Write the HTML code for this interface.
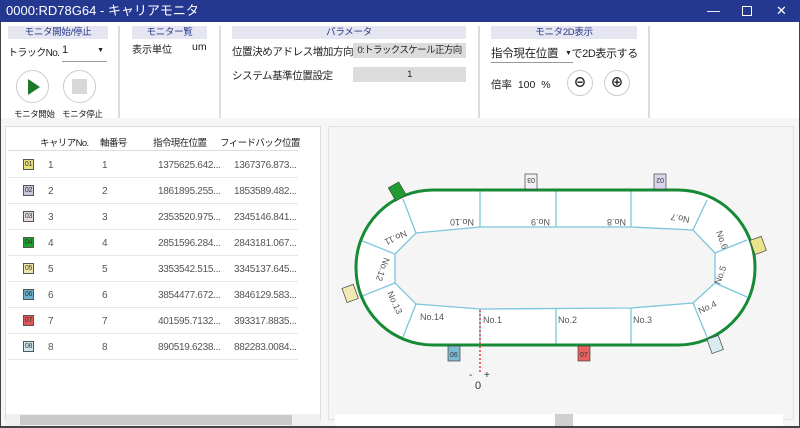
<!DOCTYPE html>
<html><head><meta charset="utf-8"><style>
*{margin:0;padding:0;box-sizing:border-box}
body{width:800px;height:428px;overflow:hidden;font-family:"Liberation Sans","Noto Sans CJK JP",sans-serif;font-size:10.5px;color:#222;background:#f6f6f8;position:relative;white-space:nowrap}
.a{position:absolute}
.title{left:0;top:0;width:800px;height:22px;background:#25388f;color:#fff;font-size:13px;line-height:22px;padding-left:6px}
.tb{left:0;top:22px;width:800px;height:96px;background:#fff}
.hd{background:#e6e6f2;color:#2a3a8a;font-size:9.5px;letter-spacing:-0.3px;text-align:center;height:13px;line-height:13px}
.sep{width:2px;background:#ddd}
.gray{background:#dcdcdc;font-size:9.5px;letter-spacing:-0.6px;text-align:center;height:15px;line-height:15px;overflow:hidden}
.circ{border-radius:50%;border:1.5px solid #ccc;background:#fff}
.row{position:absolute;left:8px;width:290px;height:26px;border-bottom:1px solid #e8e8e8;font-size:10px;color:#555;letter-spacing:-0.3px}
.row span{position:absolute;top:8px}
.sw{position:absolute;left:15px;top:7px;width:11px;height:11px;border:1px solid #555;font-size:7px;line-height:9px;text-align:center;color:#333;font-style:normal}
.th{position:absolute;top:8px;font-size:9.5px;letter-spacing:-0.6px}
</style></head><body>
<div class="a title">0000:RD78G64 - キャリアモニタ<span style="position:absolute;left:707px;font-size:13px">—</span><span style="position:absolute;left:742px;top:6px;width:10px;height:10px;border:1px solid #fff"></span><span style="position:absolute;left:776px;font-size:13px">✕</span></div>
<div class="a tb"></div>
<div class="a hd" style="left:8px;top:26px;width:100px">モニタ開始/停止</div>
<div class="a" style="left:8px;top:44px;font-size:10px;letter-spacing:-0.6px">トラックNo.</div>
<div class="a" style="left:62px;top:44px;width:45px;height:18px;border-bottom:1px solid #999;font-size:11px">1<span style="position:absolute;right:3px;font-size:7px;top:3px">▼</span></div>
<div class="a circ" style="left:16px;top:70px;width:33px;height:33px"></div>
<div class="a" style="left:28px;top:79px;width:0;height:0;border-left:12px solid #1d7a2c;border-top:8px solid transparent;border-bottom:8px solid transparent"></div>
<div class="a circ" style="left:63px;top:70px;width:33px;height:33px"></div>
<div class="a" style="left:72px;top:79px;width:15px;height:15px;background:#d8d8d8"></div>
<div class="a" style="left:14px;top:108px;font-size:8.5px;letter-spacing:-0.4px">モニタ開始</div>
<div class="a" style="left:62px;top:108px;font-size:8.5px;letter-spacing:-0.4px">モニタ停止</div>
<div class="a sep" style="left:118px;top:26px;height:92px"></div>
<div class="a hd" style="left:132px;top:26px;width:75px">モニター覧</div>
<div class="a" style="left:132px;top:41px;font-size:10px">表示単位</div>
<div class="a" style="left:192px;top:41px">um</div>
<div class="a sep" style="left:219px;top:26px;height:92px"></div>
<div class="a hd" style="left:232px;top:26px;width:234px">パラメータ</div>
<div class="a" style="left:232px;top:44px;font-size:10.5px;letter-spacing:-0.4px">位置決めアドレス増加方向</div>
<div class="a gray" style="left:353px;top:43px;width:113px">0:トラックスケール正方向</div>
<div class="a" style="left:232px;top:68px;font-size:10.5px;letter-spacing:-0.4px">システム基準位置設定</div>
<div class="a gray" style="left:353px;top:67px;width:113px">1</div>
<div class="a sep" style="left:478px;top:26px;height:92px"></div>
<div class="a hd" style="left:491px;top:26px;width:146px">モニタ2D表示</div>
<div class="a" style="left:491px;top:45px;width:82px;height:18px;border-bottom:1px solid #999;font-size:11.5px;letter-spacing:-0.3px">指令現在位置</div>
<div class="a" style="left:565px;top:45px;font-size:11px;letter-spacing:-0.4px"><span style="font-size:7px;vertical-align:2px">▼</span>で2D表示する</div>
<div class="a" style="left:491px;top:77px;font-size:10.5px">倍率&nbsp; 100&nbsp; %</div>
<div class="a circ" style="left:567px;top:70px;width:26px;height:26px;text-align:center;line-height:23px;font-size:13px;font-weight:bold">⊖</div>
<div class="a circ" style="left:604px;top:70px;width:26px;height:26px;text-align:center;line-height:23px;font-size:13px;font-weight:bold">⊕</div>
<div class="a sep" style="left:648px;top:26px;height:92px"></div>

<div class="a" style="left:5px;top:126px;width:316px;height:294px;background:#fff;border:1px solid #ddd"></div>
<div class="a" style="left:8px;top:127px;width:290px;height:24px;border-bottom:1px solid #ddd">
<span class="th" style="left:32px">キャリアNo.</span><span class="th" style="left:92px">軸番号</span><span class="th" style="left:145px">指令現在位置</span><span class="th" style="left:212px">フィードバック位置</span></div>
<div class="row" style="top:152px"><i class="sw" style="background:#e8df7a">01</i><span style="left:40px">1</span><span style="left:94px">1</span><span style="left:150px">1375625.642...</span><span style="left:226px">1367376.873...</span></div>
<div class="row" style="top:178px"><i class="sw" style="background:#c8c6da">02</i><span style="left:40px">2</span><span style="left:94px">2</span><span style="left:150px">1861895.255...</span><span style="left:226px">1853589.482...</span></div>
<div class="row" style="top:204px"><i class="sw" style="background:#e6dde4">03</i><span style="left:40px">3</span><span style="left:94px">3</span><span style="left:150px">2353520.975...</span><span style="left:226px">2345146.841...</span></div>
<div class="row" style="top:230px"><i class="sw" style="background:#1f9c2f">04</i><span style="left:40px">4</span><span style="left:94px">4</span><span style="left:150px">2851596.284...</span><span style="left:226px">2843181.067...</span></div>
<div class="row" style="top:256px"><i class="sw" style="background:#efe6a8">05</i><span style="left:40px">5</span><span style="left:94px">5</span><span style="left:150px">3353542.515...</span><span style="left:226px">3345137.645...</span></div>
<div class="row" style="top:282px"><i class="sw" style="background:#6ab0cc">06</i><span style="left:40px">6</span><span style="left:94px">6</span><span style="left:150px">3854477.672...</span><span style="left:226px">3846129.583...</span></div>
<div class="row" style="top:308px"><i class="sw" style="background:#e05555">07</i><span style="left:40px">7</span><span style="left:94px">7</span><span style="left:150px">401595.7132...</span><span style="left:226px">393317.8835...</span></div>
<div class="row" style="top:334px"><i class="sw" style="background:#cfe6ee">08</i><span style="left:40px">8</span><span style="left:94px">8</span><span style="left:150px">890519.6238...</span><span style="left:226px">882283.0084...</span></div>
<div class="a" style="left:6px;top:414px;width:314px;height:12px;background:#f0f0f0"></div>
<div class="a" style="left:20px;top:415px;width:272px;height:10px;background:#c9c9c9"></div>

<div class="a" style="left:328px;top:126px;width:466px;height:294px;background:#f4f5f4;border:1px solid #e2e2e2"></div>
<div class="a" style="left:335px;top:414px;width:448px;height:12px;background:#fff"></div>
<div class="a" style="left:555px;top:414px;width:18px;height:12px;background:#cfcfcf"></div>
<div class="a" style="left:0;top:426px;width:800px;height:2px;background:#444"></div>
<div class="a" style="left:0;top:22px;width:1px;height:406px;background:#444"></div>
<div class="a" style="left:799px;top:22px;width:1px;height:406px;background:#444"></div>

<svg class="a" style="left:0;top:0" width="800" height="428" font-family="Liberation Sans" font-size="9" fill="#555">
<rect x="356" y="190" width="399" height="155" rx="77" fill="#fff"/>
<polygon points="416,233 480,227 631,227 693,230 715,253 715,283 693,303 631,308 480,309 416,304 395,283 395,254" fill="#f4f5f4" stroke="#7cc6dc" stroke-width="1.3"/>
<g stroke="#7cc6dc" stroke-width="1.3">
<line x1="480" y1="190" x2="480" y2="227"/><line x1="556" y1="190" x2="556" y2="227"/><line x1="631" y1="190" x2="631" y2="227"/>
<line x1="480" y1="309" x2="480" y2="345"/><line x1="556" y1="309" x2="556" y2="345"/><line x1="631" y1="308" x2="631" y2="345"/>
<line x1="403" y1="199" x2="416" y2="233"/><line x1="360" y1="240" x2="395" y2="254"/><line x1="360" y1="297" x2="395" y2="283"/><line x1="403" y1="337" x2="416" y2="304"/>
<line x1="707" y1="200" x2="693" y2="230"/><line x1="747" y1="240" x2="715" y2="253"/><line x1="747" y1="297" x2="715" y2="283"/><line x1="707" y1="337" x2="693" y2="303"/>
</g>
<rect x="356" y="190" width="399" height="155" rx="77" fill="none" stroke="#178a36" stroke-width="3"/>
<text x="420" y="320">No.14</text><text x="483" y="323">No.1</text><text x="558" y="323">No.2</text><text x="633" y="323">No.3</text>
<text transform="translate(700,314) rotate(-25)">No.4</text>
<text transform="translate(720,285) rotate(-70)">No.5</text>
<text transform="translate(716,232) rotate(70)">No.6</text>
<text transform="translate(690,217) rotate(190)">No.7</text>
<text transform="translate(626,219) rotate(180)">No.8</text>
<text transform="translate(550,219) rotate(180)">No.9</text>
<text transform="translate(474,219) rotate(180)">No.10</text>
<text transform="translate(405,230) rotate(155)">No.11</text>
<text transform="translate(384,257) rotate(110)">No.12</text>
<text transform="translate(387,293) rotate(65)">No.13</text>
<line x1="480" y1="310" x2="480" y2="372" stroke="#e04040" stroke-width="1.5" stroke-dasharray="2,2"/>
<text x="469" y="378" font-size="10" fill="#333">-</text><text x="484" y="378" font-size="10" fill="#333">+</text>
<text x="475" y="389" font-size="11" fill="#333">0</text>
<g font-size="7" stroke="#444" stroke-width=".7">
<rect x="525" y="174" width="12" height="15" fill="#f2f0f4"/><text transform="translate(535,178) rotate(180)" stroke="none" fill="#333">03</text>
<rect x="654" y="174" width="12" height="15" fill="#d8d6e8"/><text transform="translate(664,178) rotate(180)" stroke="none" fill="#333">02</text>
<rect x="391" y="184" width="12" height="15" fill="#1f9c2f" transform="rotate(-30 397 191)"/>
<rect x="752" y="238" width="12" height="15" fill="#ece48a" transform="rotate(-20 758 245)"/>
<rect x="344" y="286" width="12" height="15" fill="#f1eab2" transform="rotate(-20 350 293)"/>
<rect x="448" y="346" width="12" height="15" fill="#7cbbd4"/><text x="450" y="357" stroke="none" fill="#333">06</text>
<rect x="578" y="346" width="12" height="15" fill="#e86060"/><text x="580" y="357" stroke="none" fill="#333">07</text>
<rect x="709" y="337" width="12" height="15" fill="#d8ecf2" transform="rotate(-20 715 344)"/>
</g>
</svg>
</body></html>
